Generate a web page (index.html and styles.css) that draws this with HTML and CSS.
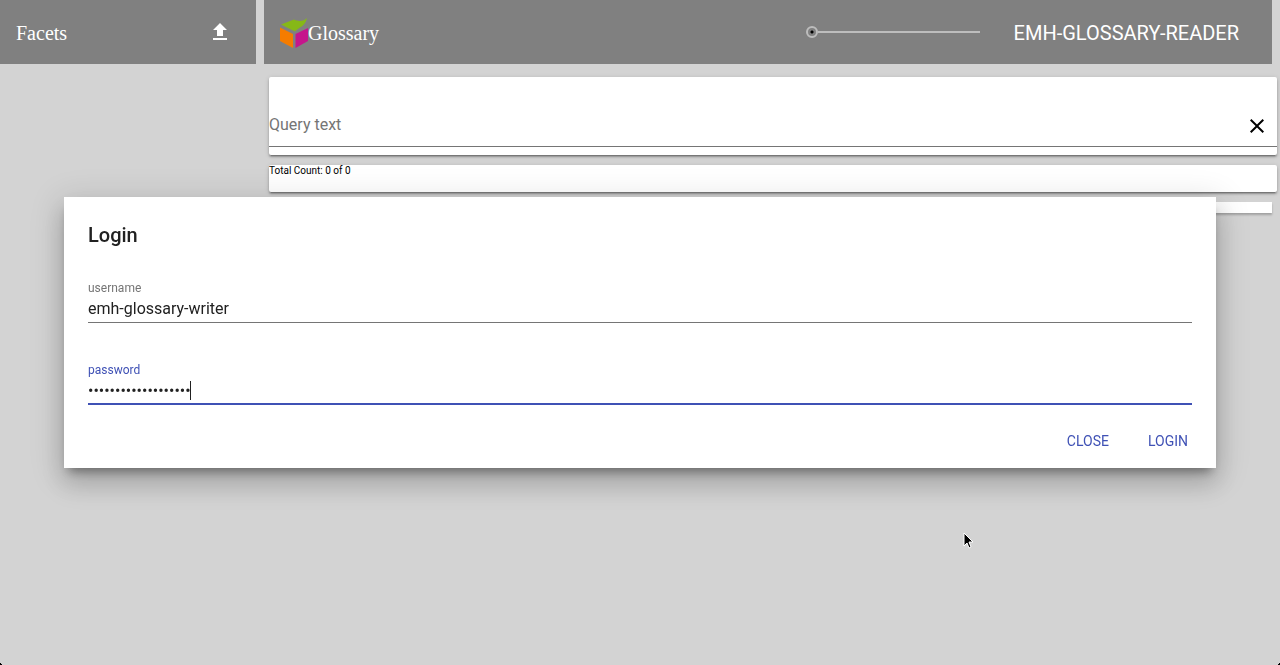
FILE: index.html
```html
<!DOCTYPE html>
<html lang="en">
<head>
<meta charset="utf-8">
<meta name="viewport" content="width=device-width, initial-scale=1">
<title>Glossary</title>
<link rel="stylesheet" href="styles.css">
</head>
<body>
<div class="app">
  <aside class="sidebar">
    <header class="toolbar toolbar-side">
      <h2 class="toolbar-title">Facets</h2>
      <button class="icon-button" type="button" aria-label="Upload">
        <svg width="24" height="24" viewBox="0 0 24 24"><path fill="#fff" d="M9 16h6v-6h4l-7-7-7 7h4zM5 18h14v2H5z"/></svg>
      </button>
    </header>
  </aside>
  <main class="main">
    <header class="toolbar">
      <svg class="logo" width="28" height="32" viewBox="0 0 28 32" aria-hidden="true">
        <path fill="#86b817" d="M1 7.500 L14 2.500 C19 5 24 4 27 1 C25 10 19 10 15 14.500 Z"/>
        <path fill="#f57c00" d="M0 10.500 L13 17 V31 L0 24 Z"/>
        <path fill="#c5168c" d="M15.500 17 L28 11 V24 L15.500 31 Z"/>
      </svg>
      <h1 class="toolbar-title">Glossary</h1>
      <input class="slider" type="range" min="0" max="100" value="0" aria-label="Level">
      <button class="user-button" type="button">EMH-GLOSSARY-READER</button>
    </header>
    <section class="card query-card">
      <div class="query-row">
        <input class="query-input" type="text" placeholder="Query text" aria-label="Query text">
        <button class="icon-button" type="button" aria-label="Clear query">
          <svg width="24" height="24" viewBox="0 0 24 24"><path fill="#000" d="M19 6.4 17.6 5 12 10.6 6.4 5 5 6.4 10.6 12 5 17.6 6.4 19 12 13.4 17.6 19 19 17.6 13.4 12z"/></svg>
        </button>
      </div>
    </section>
    <section class="card count-card">Total Count: 0 of 0</section>
    <section class="results"></section>
  </main>
</div>
<div class="overlay">
  <form class="dialog" role="dialog" aria-labelledby="login-title">
    <h2 class="dialog-title" id="login-title">Login</h2>
    <div class="field">
      <label class="field-label" for="username">username</label>
      <input class="field-input" id="username" type="text" value="emh-glossary-writer">
    </div>
    <div class="field field-active">
      <label class="field-label" for="password">password</label>
      <input class="field-input" id="password" type="password" value="glossary-writer-pwd">
      <span class="caret"></span>
    </div>
    <div class="actions">
      <button class="action" type="button">CLOSE</button>
      <button class="action" type="button">LOGIN</button>
    </div>
  </form>
</div>
<svg class="pointer" width="12" height="18" viewBox="0 0 12 18" aria-hidden="true"><path fill="#000" stroke="#fff" d="M1 1v13l3-3 2 5 2-1-2-5h4z"/></svg>
<span class="corner corner-left"></span>
<span class="corner corner-right"></span>
</body>
</html>
```
FILE: styles.css
```css
* {
  box-sizing: border-box;
}

body {
  margin: 0;
  min-height: 100vh;
  overflow-x: hidden;
  background: #d3d3d3;
  font-family: Roboto, sans-serif;
  color: #212121;
}

button,
input {
  font: inherit;
  color: inherit;
  border: 0;
  margin: 0;
  padding: 0;
  background: none;
  outline: 0;
}

.app {
  display: flex;
  gap: 8px;
  padding-right: 8px;
}

.sidebar {
  flex: 0 0 256px;
}

.main {
  flex: 1;
  min-width: 0;
}

.toolbar {
  display: flex;
  align-items: center;
  height: 64px;
  padding: 0 16px;
  background: #808080;
  color: #fff;
}

.toolbar-side {
  justify-content: space-between;
  padding-right: 24px;
}

.toolbar-title {
  margin: 0;
  font: 400 20px/24px "Liberation Serif", serif;
  padding-top: 2px;
}

.icon-button {
  display: flex;
}

.logo {
  flex: none;
  margin-top: 2px;
}

.slider {
  appearance: none;
  width: 174px;
  height: 12px;
  margin: 0 34px 0 auto;
}

.slider::-webkit-slider-runnable-track {
  height: 12px;
  background: linear-gradient(#bdbdbd, #bdbdbd) 12px 5px / 100% 2px no-repeat;
}

.slider::-webkit-slider-thumb {
  appearance: none;
  width: 12px;
  height: 12px;
  border: 2px solid #bdbdbd;
  border-radius: 50%;
  background: radial-gradient(circle, #000 1px, #808080 2px);
}

.user-button {
  margin-right: 17px;
  padding-top: 2px;
  font-size: 20px;
  line-height: 24px;
}

.card {
  width: 100%;
  margin: 0 5px 10px;
  border-radius: 2px;
  background: #fff;
  box-shadow: 0 2px 2px rgba(0, 0, 0, .24), 0 1px 5px rgba(0, 0, 0, .14), 0 3px 1px -2px rgba(0, 0, 0, .2);
}

.query-card {
  margin-top: 13px;
  padding: 28px 0 8px;
}

.query-row {
  display: flex;
  align-items: center;
  height: 42px;
  padding-right: 8px;
  border-bottom: 1px solid #757575;
}

.query-input {
  flex: 1;
  height: 24px;
  padding-bottom: 2px;
  font-size: 16px;
}

.query-input::placeholder {
  color: #757575;
  opacity: 1;
}

.count-card {
  min-height: 27px;
  font-size: 10px;
  line-height: 12px;
  color: #000;
}

.results {
  min-height: 11px;
  margin-left: 5px;
  background: #fff;
  box-shadow: 0 2px 2px rgba(0, 0, 0, .24);
}

.overlay {
  position: fixed;
  inset: 0;
  display: flex;
  align-items: center;
  padding: 0 64px;
}

.dialog {
  flex: 1;
  padding: 24px 24px 8px;
  background: #fff;
  box-shadow: 0 16px 24px 2px rgba(0, 0, 0, .14), 0 6px 30px 5px rgba(0, 0, 0, .12), 0 8px 10px -5px rgba(0, 0, 0, .4);
}

.dialog-title {
  margin: 0 0 32px;
  font-size: 20px;
  font-weight: 500;
  line-height: 28px;
}

.field {
  position: relative;
  display: flex;
  flex-direction: column;
  height: 42px;
  margin-bottom: 40px;
  border-bottom: 1px solid #757575;
}

.field-label {
  font-size: 12px;
  line-height: 14px;
  color: #757575;
}

.field-input {
  flex: none;
  width: 100%;
  height: 28px;
  font-size: 16px;
  line-height: 28px;
}

.field-active {
  margin-bottom: 17px;
  border-bottom: 2px solid #3f51b5;
}

.field-active .field-label {
  color: #3f51b5;
}

.caret {
  position: absolute;
  left: 102px;
  top: 18px;
  width: 1px;
  height: 19px;
  background: #212121;
}

.actions {
  display: flex;
  justify-content: flex-end;
  gap: 31px;
}

.action {
  height: 38px;
  padding: 0 4px;
  font-size: 14px;
  line-height: 20px;
  color: #3f51b5;
}

.pointer {
  position: fixed;
  left: 963px;
  top: 532px;
}

.corner {
  position: fixed;
  bottom: 0;
  width: 4px;
  height: 4px;
}

.corner-left {
  left: 0;
  background: radial-gradient(circle at 100% 0, transparent 4px, #000 4px);
}

.corner-right {
  right: 0;
  background: radial-gradient(circle at 0 0, transparent 4px, #000 4px);
}
```
